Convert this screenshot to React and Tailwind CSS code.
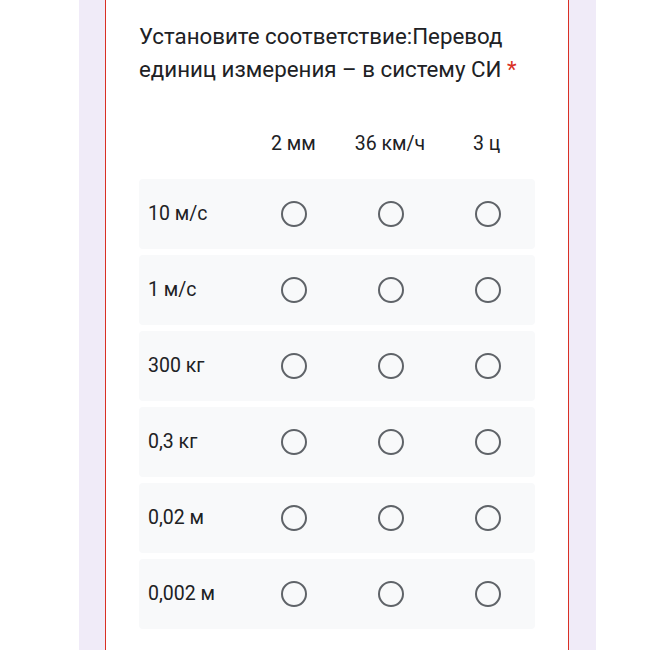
import React from "react";

const cols = ["2 мм", "36 км/ч", "3 ц"];
const rows = ["10 м/с", "1 м/с", "300 кг", "0,3 кг", "0,02 м", "0,002 м"];

function Radio() {
  return (
    <div className="w-[26px] h-[26px] rounded-full border-[2.5px] border-[#5f6368]" />
  );
}

export default function App() {
  return (
    <div className="w-[649px] h-[650px] bg-white overflow-hidden flex" style={{ fontFamily: "Roboto, 'Noto Sans', sans-serif" }}>
      <div className="ml-[79px] w-[517px] h-full bg-[#f0ebf8] pl-[26px] pr-[27px]">
        <div className="h-full bg-white border-x border-[#d93025] pl-[33px] pr-[33px] pt-[20px]">
          <div className="text-[22.3px] leading-[33px] text-[#202124]">
            Установите соответствие:Перевод единиц измерения – в систему СИ{" "}
            <span className="text-[#d93025]">*</span>
          </div>
          <div className="mt-[43px] grid grid-cols-[106px_1fr_1fr_1fr] text-[19.5px] text-[#202124] h-[20px] items-center">
            <div />
            {cols.map((c) => (
              <div key={c} className="text-center">{c}</div>
            ))}
          </div>
          <div className="mt-[30px] flex flex-col gap-[6px]">
            {rows.map((r) => (
              <div key={r} className="h-[70px] bg-[#f8f9fa] rounded-[4px] grid grid-cols-[106px_1fr_1fr_1fr] items-center">
                <div className="pl-[9px] text-[19.5px] text-[#202124]">{r}</div>
                {cols.map((c) => (
                  <div key={c} className="flex justify-center pl-[2px]">
                    <Radio />
                  </div>
                ))}
              </div>
            ))}
          </div>
        </div>
      </div>
    </div>
  );
}
